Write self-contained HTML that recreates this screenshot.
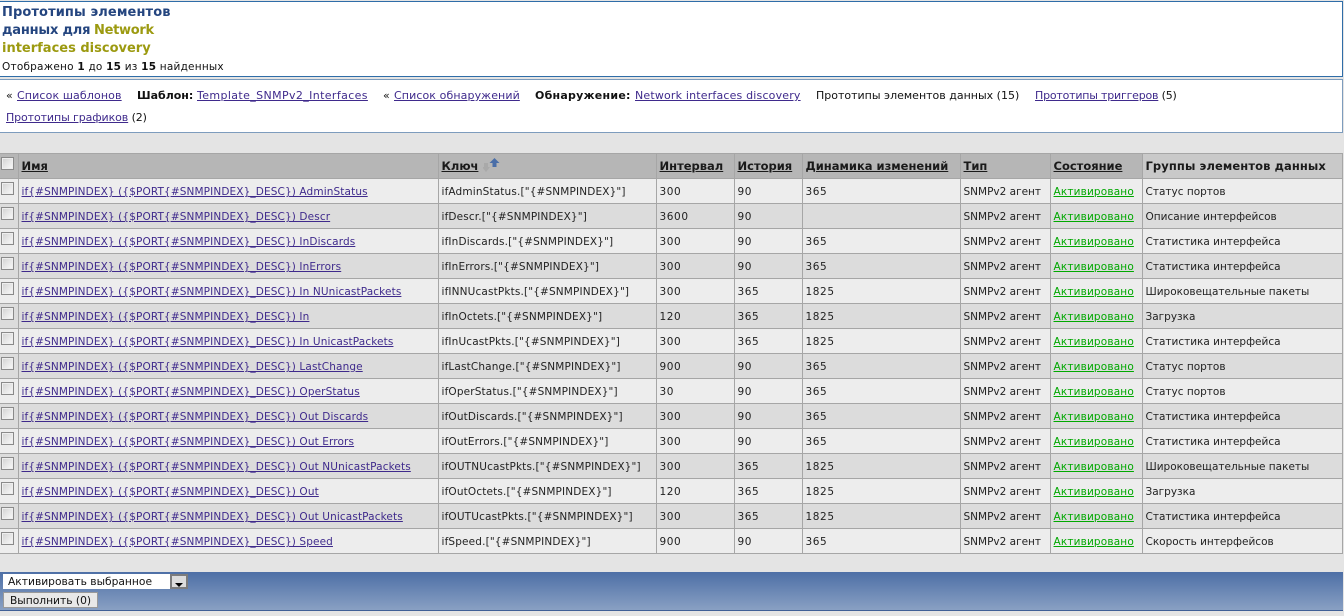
<!DOCTYPE html>
<html lang="ru"><head><meta charset="utf-8"><title>Прототипы элементов данных</title>
<style>
html,body{margin:0;padding:0;width:1344px;height:616px;overflow:hidden;background:#e4e4e4;font-family:"DejaVu Sans","Liberation Sans",sans-serif;font-size:11px;color:#111}
a{color:#3f2a8c;text-decoration:underline}
.abs{position:absolute;white-space:nowrap}
#b1{left:0;top:1px;width:1342px;height:74px;background:#fff;border:solid #2f6da8;border-width:1px 1px 1px 0;position:absolute}
#b2{left:0;top:79px;width:1342px;height:52px;background:#fff;border:solid #7d9cbd;border-width:1px 1px 1px 0;position:absolute}
.h{font:bold 13px/18px "DejaVu Sans",sans-serif;left:2px;color:#24457f}
.o{color:#9c9a10}
.n{top:89px}
table{position:absolute;left:0;top:153px;width:1343px;border-collapse:collapse;table-layout:fixed;border:1px solid #a6a6a6;border-left:0}
td,th{border:1px solid #a6a6a6;padding:0 0 0 3px;text-align:left;white-space:nowrap;overflow:hidden;font-size:10.5px;color:#222;font-weight:normal}
td{height:22px;padding-top:2px}
th{height:24px}
tr{height:25px}
td:first-child,th:first-child{border-left:0;padding:0}
th{background:#b6b6b6;font-weight:bold;font-size:11.5px;color:#1a1a1a}
th a{color:#1a1a1a}
th:last-child{background:#c9c9c9;letter-spacing:.1px}
tr:nth-child(even) td{background:#ededed}
tr:nth-child(odd) td{background:#dcdcdc}
td:nth-child(2) a{letter-spacing:.12px}
td:nth-child(3){letter-spacing:.15px}
td:nth-child(4),td:nth-child(5),td:nth-child(6){letter-spacing:.6px}
td .c{margin-bottom:5px}
.c{display:block;width:11px;height:11px;margin:0 0 5px 1px;border:1px solid #8a8a8a;background:linear-gradient(135deg,#d0d0d0,#fbfbfb);box-shadow:inset 0 0 0 1px #eee}
td:nth-child(8) a.g{color:#00a800;letter-spacing:.16px}
#f{position:absolute;left:0;top:572px;width:1343px;height:38px;background:linear-gradient(#4d6fa6,#89a0c3);border-bottom:1px solid #3f5f96}
#s{position:absolute;left:3px;top:2px;width:183px;height:15px;background:#fff;font-size:10.7px;line-height:16px;text-indent:5px;color:#111}
#a{position:absolute;left:167px;top:0;width:18px;height:15px;background:#dcdcdc;border:2px solid #7c7c7c;box-sizing:border-box}
#a:after{content:"";position:absolute;left:3px;top:7px;border:4px solid transparent;border-top:4px solid #000;border-bottom:0}
#bt{position:absolute;left:3px;top:20px;width:93px;height:14px;background:#e8e8e8;border:1px solid #999;font-size:10.7px;line-height:16px;text-align:center;color:#111}
</style></head><body>
<div id="b1"></div><div id="b2"></div>
<div class="abs h" style="top:4px;letter-spacing:.1px">Прототипы элементов</div>
<div class="abs h" style="top:22px;letter-spacing:-.2px">данных для</div>
<div class="abs h o" style="top:22px;left:94px;letter-spacing:-.3px;color:#9c9a10">Network</div>
<div class="abs h o" style="top:40px;color:#9c9a10">interfaces discovery</div>
<div class="abs" style="left:2px;top:61px;font-size:10.5px;letter-spacing:.22px">Отображено <b>1</b> до <b>15</b> из <b>15</b> найденных</div>

<div class="abs n" style="left:6px">«</div><div class="abs n" style="left:17px;letter-spacing:.13px"><a href="#">Список шаблонов</a></div>
<div class="abs n" style="left:137px"><b>Шаблон:</b></div><div class="abs n" style="left:197px;letter-spacing:.38px"><a href="#">Template_SNMPv2_Interfaces</a></div>
<div class="abs n" style="left:383px">«</div><div class="abs n" style="left:394px;letter-spacing:.1px"><a href="#">Список обнаружений</a></div>
<div class="abs n" style="left:535px;letter-spacing:.25px"><b>Обнаружение:</b></div><div class="abs n" style="left:635px;letter-spacing:.18px"><a href="#">Network interfaces discovery</a></div>
<div class="abs n" style="left:816px">Прототипы элементов данных (15)</div>
<div class="abs n" style="left:1035px;letter-spacing:-.2px"><a href="#">Прототипы триггеров</a> (5)</div>
<div class="abs" style="left:6px;top:111px;letter-spacing:-.1px"><a href="#">Прототипы графиков</a> (2)</div>

<table>
<colgroup><col style="width:18px"><col style="width:420px"><col style="width:218px"><col style="width:78px"><col style="width:68px"><col style="width:158px"><col style="width:90px"><col style="width:92px"><col></colgroup>
<tr><th><span class="c"></span></th><th><a href="#">Имя</a></th><th><a href="#">Ключ</a></th><th><a href="#">Интервал</a></th><th><a href="#">История</a></th><th><a href="#">Динамика изменений</a></th><th><a href="#">Тип</a></th><th><a href="#">Состояние</a></th><th>Группы элементов данных</th></tr>
<tr><td><span class="c"></span></td><td><a href="#">if{#SNMPINDEX} ({$PORT{#SNMPINDEX}_DESC}) AdminStatus</a></td><td>ifAdminStatus.["{#SNMPINDEX}"]</td><td>300</td><td>90</td><td>365</td><td>SNMPv2 агент</td><td><a class="g" href="#">Активировано</a></td><td>Статус портов</td></tr>
<tr><td><span class="c"></span></td><td><a href="#">if{#SNMPINDEX} ({$PORT{#SNMPINDEX}_DESC}) Descr</a></td><td>ifDescr.["{#SNMPINDEX}"]</td><td>3600</td><td>90</td><td></td><td>SNMPv2 агент</td><td><a class="g" href="#">Активировано</a></td><td>Описание интерфейсов</td></tr>
<tr><td><span class="c"></span></td><td><a href="#">if{#SNMPINDEX} ({$PORT{#SNMPINDEX}_DESC}) InDiscards</a></td><td>ifInDiscards.["{#SNMPINDEX}"]</td><td>300</td><td>90</td><td>365</td><td>SNMPv2 агент</td><td><a class="g" href="#">Активировано</a></td><td>Статистика интерфейса</td></tr>
<tr><td><span class="c"></span></td><td><a href="#">if{#SNMPINDEX} ({$PORT{#SNMPINDEX}_DESC}) InErrors</a></td><td>ifInErrors.["{#SNMPINDEX}"]</td><td>300</td><td>90</td><td>365</td><td>SNMPv2 агент</td><td><a class="g" href="#">Активировано</a></td><td>Статистика интерфейса</td></tr>
<tr><td><span class="c"></span></td><td><a href="#">if{#SNMPINDEX} ({$PORT{#SNMPINDEX}_DESC}) In NUnicastPackets</a></td><td>ifINNUcastPkts.["{#SNMPINDEX}"]</td><td>300</td><td>365</td><td>1825</td><td>SNMPv2 агент</td><td><a class="g" href="#">Активировано</a></td><td>Широковещательные пакеты</td></tr>
<tr><td><span class="c"></span></td><td><a href="#">if{#SNMPINDEX} ({$PORT{#SNMPINDEX}_DESC}) In</a></td><td>ifInOctets.["{#SNMPINDEX}"]</td><td>120</td><td>365</td><td>1825</td><td>SNMPv2 агент</td><td><a class="g" href="#">Активировано</a></td><td>Загрузка</td></tr>
<tr><td><span class="c"></span></td><td><a href="#">if{#SNMPINDEX} ({$PORT{#SNMPINDEX}_DESC}) In UnicastPackets</a></td><td>ifInUcastPkts.["{#SNMPINDEX}"]</td><td>300</td><td>365</td><td>1825</td><td>SNMPv2 агент</td><td><a class="g" href="#">Активировано</a></td><td>Статистика интерфейса</td></tr>
<tr><td><span class="c"></span></td><td><a href="#">if{#SNMPINDEX} ({$PORT{#SNMPINDEX}_DESC}) LastChange</a></td><td>ifLastChange.["{#SNMPINDEX}"]</td><td>900</td><td>90</td><td>365</td><td>SNMPv2 агент</td><td><a class="g" href="#">Активировано</a></td><td>Статус портов</td></tr>
<tr><td><span class="c"></span></td><td><a href="#">if{#SNMPINDEX} ({$PORT{#SNMPINDEX}_DESC}) OperStatus</a></td><td>ifOperStatus.["{#SNMPINDEX}"]</td><td>30</td><td>90</td><td>365</td><td>SNMPv2 агент</td><td><a class="g" href="#">Активировано</a></td><td>Статус портов</td></tr>
<tr><td><span class="c"></span></td><td><a href="#">if{#SNMPINDEX} ({$PORT{#SNMPINDEX}_DESC}) Out Discards</a></td><td>ifOutDiscards.["{#SNMPINDEX}"]</td><td>300</td><td>90</td><td>365</td><td>SNMPv2 агент</td><td><a class="g" href="#">Активировано</a></td><td>Статистика интерфейса</td></tr>
<tr><td><span class="c"></span></td><td><a href="#">if{#SNMPINDEX} ({$PORT{#SNMPINDEX}_DESC}) Out Errors</a></td><td>ifOutErrors.["{#SNMPINDEX}"]</td><td>300</td><td>90</td><td>365</td><td>SNMPv2 агент</td><td><a class="g" href="#">Активировано</a></td><td>Статистика интерфейса</td></tr>
<tr><td><span class="c"></span></td><td><a href="#">if{#SNMPINDEX} ({$PORT{#SNMPINDEX}_DESC}) Out NUnicastPackets</a></td><td>ifOUTNUcastPkts.["{#SNMPINDEX}"]</td><td>300</td><td>365</td><td>1825</td><td>SNMPv2 агент</td><td><a class="g" href="#">Активировано</a></td><td>Широковещательные пакеты</td></tr>
<tr><td><span class="c"></span></td><td><a href="#">if{#SNMPINDEX} ({$PORT{#SNMPINDEX}_DESC}) Out</a></td><td>ifOutOctets.["{#SNMPINDEX}"]</td><td>120</td><td>365</td><td>1825</td><td>SNMPv2 агент</td><td><a class="g" href="#">Активировано</a></td><td>Загрузка</td></tr>
<tr><td><span class="c"></span></td><td><a href="#">if{#SNMPINDEX} ({$PORT{#SNMPINDEX}_DESC}) Out UnicastPackets</a></td><td>ifOUTUcastPkts.["{#SNMPINDEX}"]</td><td>300</td><td>365</td><td>1825</td><td>SNMPv2 агент</td><td><a class="g" href="#">Активировано</a></td><td>Статистика интерфейса</td></tr>
<tr><td><span class="c"></span></td><td><a href="#">if{#SNMPINDEX} ({$PORT{#SNMPINDEX}_DESC}) Speed</a></td><td>ifSpeed.["{#SNMPINDEX}"]</td><td>900</td><td>90</td><td>365</td><td>SNMPv2 агент</td><td><a class="g" href="#">Активировано</a></td><td>Скорость интерфейсов</td></tr>
</table>
<svg class="abs" style="left:483px;top:157px" width="18" height="16" viewBox="0 0 18 16"><path d="M1 6h4v4h2l-4 5-4-5h2z" fill="#a9a9a9"/><path d="M11.500 1L16.500 6H13.500V10H9.500V6H6.500Z" fill="#4a6ea8"/></svg>
<div id="f"><div id="s">Активировать выбранное<div id="a"></div></div><div id="bt">Выполнить (0)</div></div>
</body></html>
